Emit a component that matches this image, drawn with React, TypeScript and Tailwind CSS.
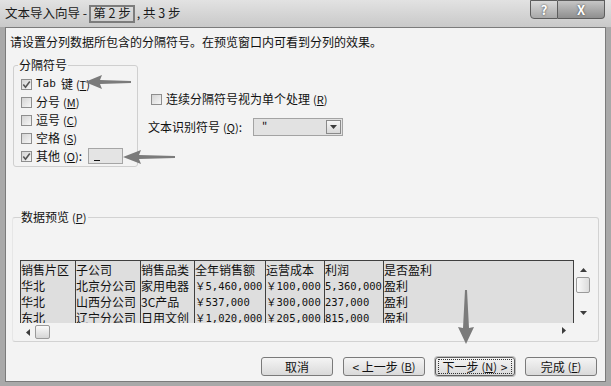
import type { ReactNode } from 'react';

const header = ['销售片区', '子公司', '销售品类', '全年销售额', '运营成本', '利润', '是否盈利'];
const rows = [
  ['华北', '北京分公司', '家用电器', '￥5,460,000', '￥100,000', '5,360,000', '盈利'],
  ['华北', '山西分公司', '3C产品', '￥537,000', '￥300,000', '237,000', '盈利'],
  ['东北', '辽宁分公司', '日用文创', '￥1,020,000', '￥205,000', '815,000', '盈利'],
];
const colWidths = ['w-[54px]', 'w-[65px]', 'w-[54px]', 'w-[71px]', 'w-[59px]', 'w-[59px]', 'flex-1'];
const numCols = [3, 4, 5];

function Check({ checked }: { checked?: boolean }) {
  return (
    <span className="w-[11px] h-[11px] shrink-0 border border-[#8e8e8e] bg-linear-to-br from-[#d4d4d4] to-[#f6f6f6] flex items-center justify-center">
      {checked && (
        <svg width="9" height="9" viewBox="0 0 9 9">
          <path d="M1.3 4.6 L3.5 7.2 L7.8 1.4" stroke="#555" strokeWidth="1.6" fill="none" />
        </svg>
      )}
    </span>
  );
}

function Key({ k }: { k: string }) {
  return (
    <span className="text-[11px] ml-[3px]">
      (<span className="underline">{k}</span>)
    </span>
  );
}

function Option({ checked, children }: { checked?: boolean; children: ReactNode }) {
  return (
    <div className="h-[18px] flex items-center gap-[4px]">
      <Check checked={checked} />
      <span className="whitespace-nowrap flex items-center">{children}</span>
    </div>
  );
}

function Btn({ children, focused }: { children: ReactNode; focused?: boolean }) {
  return (
    <div
      className={
        'h-[19px] rounded-[3px] border flex items-center justify-center whitespace-nowrap bg-linear-to-b from-[#f4f4f4] to-[#dadada] ' +
        (focused ? 'border-[#5f5f5f] shadow-[0_0_0_1px_#bdbdbd]' : 'border-[#7a7a7a]')
      }
    >
      <div className={'h-[15px] px-[3px] flex items-center whitespace-nowrap ' + (focused ? 'border border-dotted border-[#333]' : '')}>
        {children}
      </div>
    </div>
  );
}

function Tri({ dir }: { dir: 'up' | 'down' | 'left' | 'right' }) {
  const pts = {
    up: '0,4 3.5,0 7,4',
    down: '0,0 7,0 3.5,4',
    left: '4,0 4,7 0,3.5',
    right: '0,0 0,7 4,3.5',
  }[dir];
  const vert = dir === 'up' || dir === 'down';
  return (
    <svg width={vert ? 7 : 4} height={vert ? 4 : 7} viewBox={vert ? '0 0 7 4' : '0 0 4 7'}>
      <polygon points={pts} fill="#3c3c3c" />
    </svg>
  );
}

export default function App() {
  return (
    <div className="relative w-[611px] h-[386px] overflow-hidden bg-[#a9a9a9] text-[12px] text-[#111] font-['Noto_Sans_CJK_SC','Noto_Sans',sans-serif]">
      {/* title bar */}
      <div className="h-[27px] flex items-start bg-linear-to-b from-[#e2e2e2] to-[#c9c9c9]">
        <div className="h-[27px] flex items-center pl-[5px] text-[12.5px] text-[#1a1a1a]">
          <span>文本导入向导 - </span>
          <span className="ml-[2px] h-[18px] px-[2px] flex items-center border-2 border-[#7c7c7c]">第 2 步</span>
          <span className="ml-[2px]">, 共 3 步</span>
        </div>
        <div className="ml-auto mr-[6px] flex h-[19px]">
          <div className="w-[28px] h-[19px] rounded-bl-[4px] border border-[#5d5d5d] bg-linear-to-b from-[#dadada] to-[#a8a8a8] flex items-center justify-center text-[13px] font-bold text-white [text-shadow:0_0_2px_#333]">
            ?
          </div>
          <div className="w-[47px] h-[19px] rounded-br-[4px] border border-l-0 border-[#5d5d5d] bg-linear-to-b from-[#c6c6c6] to-[#8f8f8f] flex items-center justify-center text-[13px] font-bold text-white [text-shadow:0_0_2px_#333]">
            X
          </div>
        </div>
      </div>

      {/* dialog body */}
      <div className="mx-[5px] h-[355px] border border-[#7b7b7b] bg-[#f3f3f3] flex flex-col">
        <div className="mt-[6px] ml-[4px] h-[16px] leading-[16px]">
          请设置分列数据所包含的分隔符号。在预览窗口内可看到分列的效果。
        </div>

        <div className="flex items-start mt-[7px]">
          <fieldset className="ml-[7px] w-[125px] h-[110px] border border-[#cfcfcf] rounded-[3px] pl-[7px] pt-[2px]">
            <legend className="ml-[-3px] px-[1px] h-[16px] leading-[16px]">分隔符号</legend>
            <Option checked>
              <span className="font-['DejaVu_Sans_Mono',monospace] text-[11px] mr-[5px]">Tab</span>键<Key k="T" />
            </Option>
            <Option>
              分号<Key k="M" />
            </Option>
            <Option>
              逗号<Key k="C" />
            </Option>
            <Option>
              空格<Key k="S" />
            </Option>
            <Option checked>
              其他<Key k="O" />:
              <span className="ml-[6px] w-[35px] h-[16px] border border-[#a5a5a5] bg-[#e4e4e4] flex items-end pl-[5px] pb-[2px]">
                <span className="w-[6px] h-[1px] bg-[#111]" />
              </span>
            </Option>
          </fieldset>

          <div className="ml-[10px] mt-[33px] flex flex-col">
            <div className="ml-[3px]">
              <Option>
                连续分隔符号视为单个处理<Key k="R" />
              </Option>
            </div>
            <div className="mt-[10px] h-[18px] flex items-center">
              <span className="w-[105px] whitespace-nowrap flex items-center">
                文本识别符号<Key k="Q" />:
              </span>
              <div className="w-[90px] h-[18px] border border-[#a3a3a3] bg-[#e2e2e2] flex items-stretch">
                <span className="flex-1 pl-[8px] text-[11px] leading-[12px]">"</span>
                <span className="w-[15px] m-[1px] border border-[#8a8a8a] bg-linear-to-b from-[#f6f6f6] to-[#d8d8d8] flex items-center justify-center">
                  <Tri dir="down" />
                </span>
              </div>
            </div>
          </div>
        </div>

        <fieldset className="mt-[42px] ml-[6px] w-[587px] h-[133px] border border-[#d2d2d2] border-l-[#e6e6e6] rounded-[3px] pl-[7px] pt-[35px]">
          <legend className="ml-[1px] h-[16px] leading-[16px] pr-[2px]">
            数据预览<Key k="P" />
          </legend>
          <div className="flex">
            <div className="w-[554px] h-[63px] overflow-hidden border-t border-l border-r border-[#3f3f3f] bg-[#dedede] flex">
              {header.map((h, c) => (
                <div key={h} className={colWidths[c] + ' shrink-0 pt-[1px] ' + (c > 0 ? 'border-l border-[#3f3f3f] ' : '')}>
                  <div className="h-[16px] leading-[16px] whitespace-nowrap">{h}</div>
                  {rows.map((r, i) => (
                    <div
                      key={i}
                      className={
                        'h-[16px] leading-[16px] whitespace-nowrap ' +
                        (numCols.includes(c) ? "font-['DejaVu_Sans_Mono','Noto_Sans_CJK_SC',monospace] text-[10.5px]" : '')
                      }
                    >
                      {r[c]}
                    </div>
                  ))}
                </div>
              ))}
            </div>
            <div className="w-[18px] h-[63px] flex flex-col items-center pt-[8px]">
              <Tri dir="up" />
              <div className="mt-[5px] w-[14px] h-[16px] rounded-[2px] border border-[#9a9a9a] bg-linear-to-r from-[#fafafa] to-[#dcdcdc]" />
              <div className="mt-[18px]">
                <Tri dir="down" />
              </div>
            </div>
          </div>
          <div className="w-[554px] h-[18px] flex items-center">
            <span className="ml-[6px]">
              <Tri dir="left" />
            </span>
            <div className="ml-[5px] w-[15px] h-[14px] rounded-[2px] border border-[#9a9a9a] bg-linear-to-b from-[#fafafa] to-[#d6d6d6]" />
            <span className="ml-auto mr-[8px] mt-[-3px]">
              <Tri dir="right" />
            </span>
          </div>
        </fieldset>

        <div className="mt-[15px] mr-[8px] flex justify-end gap-[10px]">
          <div className="w-[72px]">
            <Btn>取消</Btn>
          </div>
          <div className="w-[82px]">
            <Btn>
              &lt; 上一步<Key k="B" />
            </Btn>
          </div>
          <div className="w-[80px]">
            <Btn focused>
              下一步<Key k="N" />
              <span className="ml-[4px]">&gt;</span>
            </Btn>
          </div>
          <div className="w-[72px]">
            <Btn>
              完成<Key k="F" />
            </Btn>
          </div>
        </div>
      </div>

      {/* annotation arrows */}
      <svg className="absolute left-[85px] top-[75px]" width="46" height="14" viewBox="0 0 46 14">
        <polygon points="0,7 17,0 15,5 46,6 46,8 15,9 17,14" fill="#7b7b7b" />
      </svg>
      <svg className="absolute left-[123px] top-[150px]" width="52" height="14" viewBox="0 0 52 14">
        <polygon points="0,7 18,0 16,5 52,6 52,8 16,9 18,14" fill="#7b7b7b" />
      </svg>
      <svg className="absolute left-[458px] top-[290px]" width="16" height="54" viewBox="0 0 16 54">
        <polygon points="8,54 0,37 5,38 7,0 9,0 11,38 16,37" fill="#7b7b7b" />
      </svg>
    </div>
  );
}
